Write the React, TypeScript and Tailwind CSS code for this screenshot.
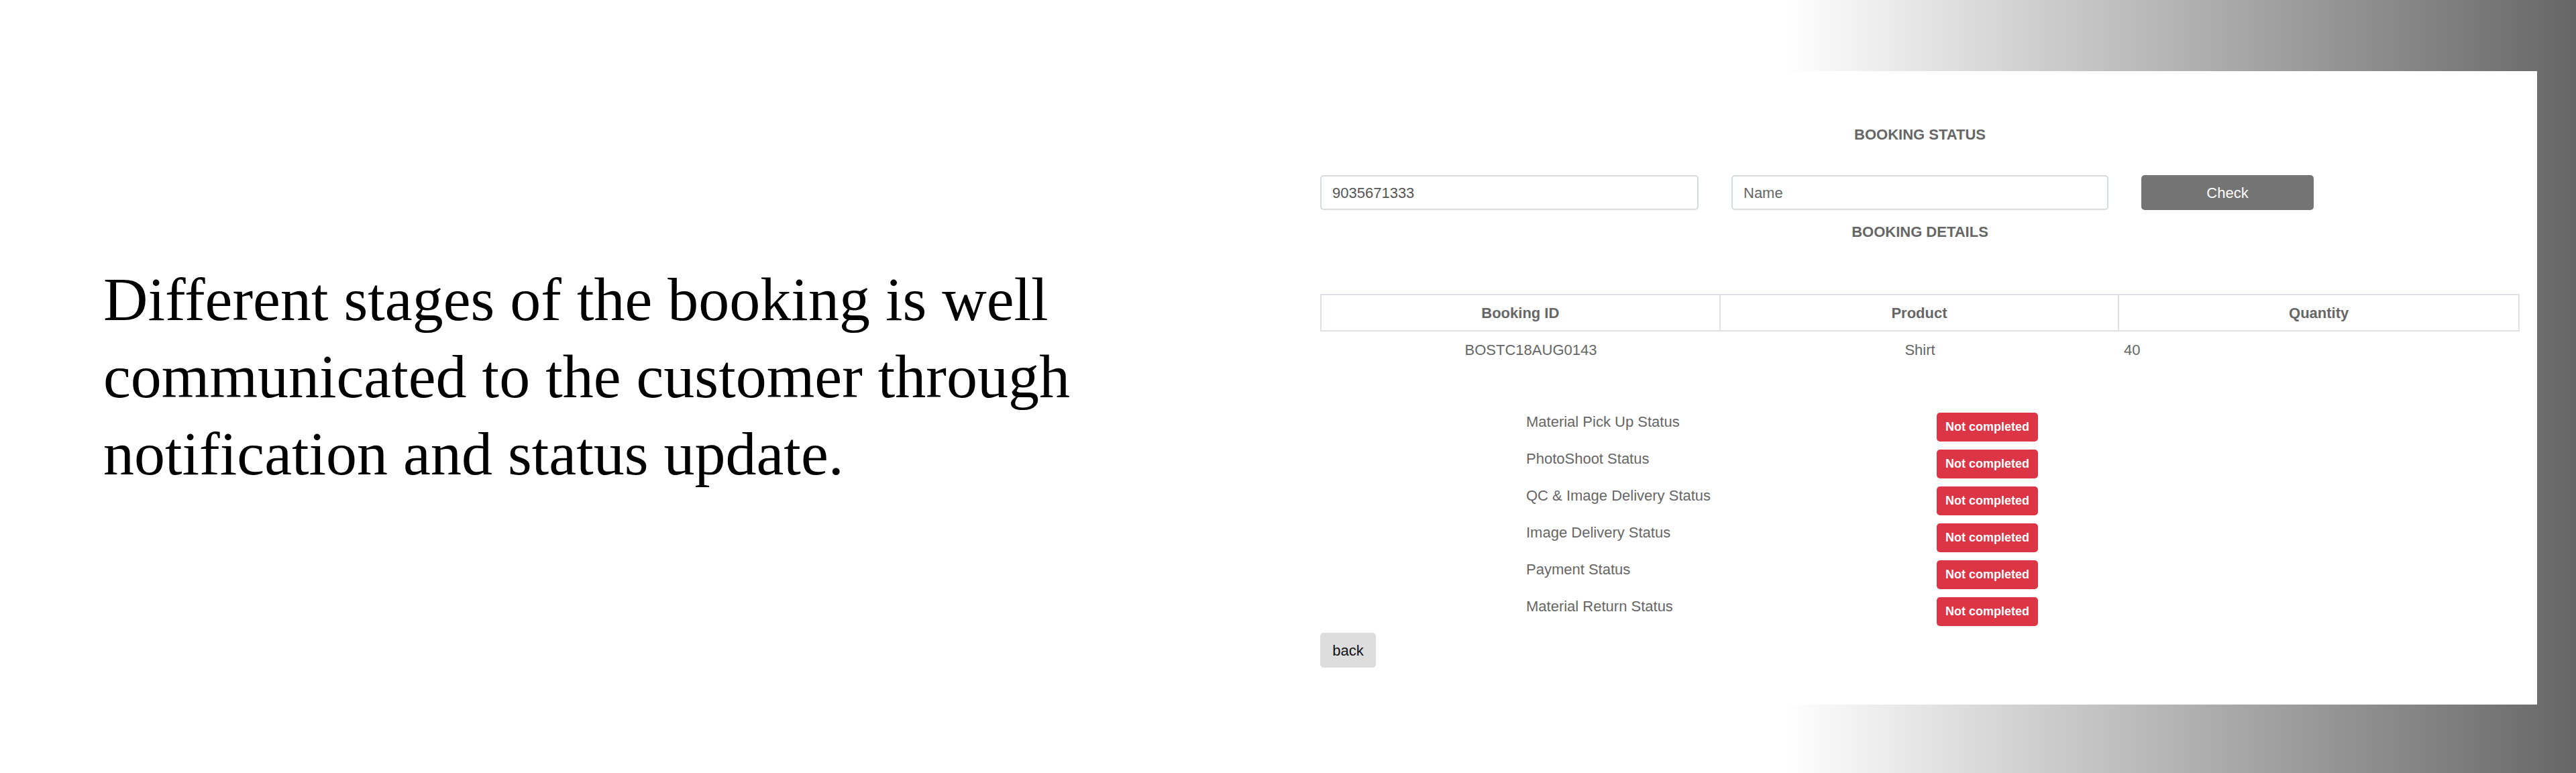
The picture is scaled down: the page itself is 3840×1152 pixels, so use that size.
export default function App() {
  const stages = [
    "Material Pick Up Status",
    "PhotoShoot Status",
    "QC & Image Delivery Status",
    "Image Delivery Status",
    "Payment Status",
    "Material Return Status",
  ]

  return (
    <div className="w-[3840px] h-[1152px] flex bg-[linear-gradient(to_right,#ffffff_2660px,#666666_3840px)]">
      {/* left caption */}
      <div className="w-[1942px] pl-[154px] pt-[389px] bg-white">
        <p className="text-[92px] leading-[115px] text-black font-['Liberation_Serif',serif]">
          Different stages of the booking is well
          <br />
          communicated to the customer through
          <br />
          notification and status update.
        </p>
      </div>

      {/* screenshot card */}
      <div className="mt-[106px] w-[1840px] h-[944px] bg-white px-[26px] flex flex-col font-['Liberation_Sans',Arial,sans-serif] text-[22px] leading-[33px] text-[#666]">
        <h3 className="mt-[78px] text-center font-bold">BOOKING STATUS</h3>

        <div className="mt-[44px] flex gap-[49px]">
          <div className="w-[564px] h-[52px] border-2 border-[#d6dbe0] rounded-[5px] flex items-center px-[16px] text-[#555]">
            9035671333
          </div>
          <div className="w-[562px] h-[52px] border-2 border-[#d6dbe0] rounded-[5px] flex items-center px-[16px] text-[#666]">
            Name
          </div>
          <button className="w-[257px] h-[52px] rounded-[5px] bg-[#747474] text-white">Check</button>
        </div>

        <h3 className="mt-[16px] text-center font-bold">BOOKING DETAILS</h3>

        <div className="mt-[76px] grid grid-cols-3 h-[56px] border-2 border-[#dee2e6]">
          <div className="flex items-center justify-center font-bold border-r-2 border-[#dee2e6]">Booking ID</div>
          <div className="flex items-center justify-center font-bold border-r-2 border-[#dee2e6]">Product</div>
          <div className="flex items-center justify-center font-bold">Quantity</div>
        </div>
        <div className="mt-[11px] grid grid-cols-3">
          <div className="text-center pl-[32px]">BOSTC18AUG0143</div>
          <div className="text-center">Shirt</div>
          <div className="pl-[6px]">40</div>
        </div>

        <div className="mt-[74px] flex flex-col">
          {stages.map((s) => (
            <div key={s} className="h-[55px] flex items-start">
              <span className="w-[919px] shrink-0 pl-[307px]">{s}</span>
              <span className="mt-[3px] w-[151px] h-[43px] rounded-[5px] bg-[#dc3545] text-white text-[18px] font-bold flex items-center justify-center">
                Not completed
              </span>
            </div>
          ))}
        </div>

        <div className="mt-[1px]">
          <button className="h-[52px] w-[83px] rounded-[5px] bg-[#dddddd] text-[#111]">back</button>
        </div>
      </div>
    </div>
  )
}
